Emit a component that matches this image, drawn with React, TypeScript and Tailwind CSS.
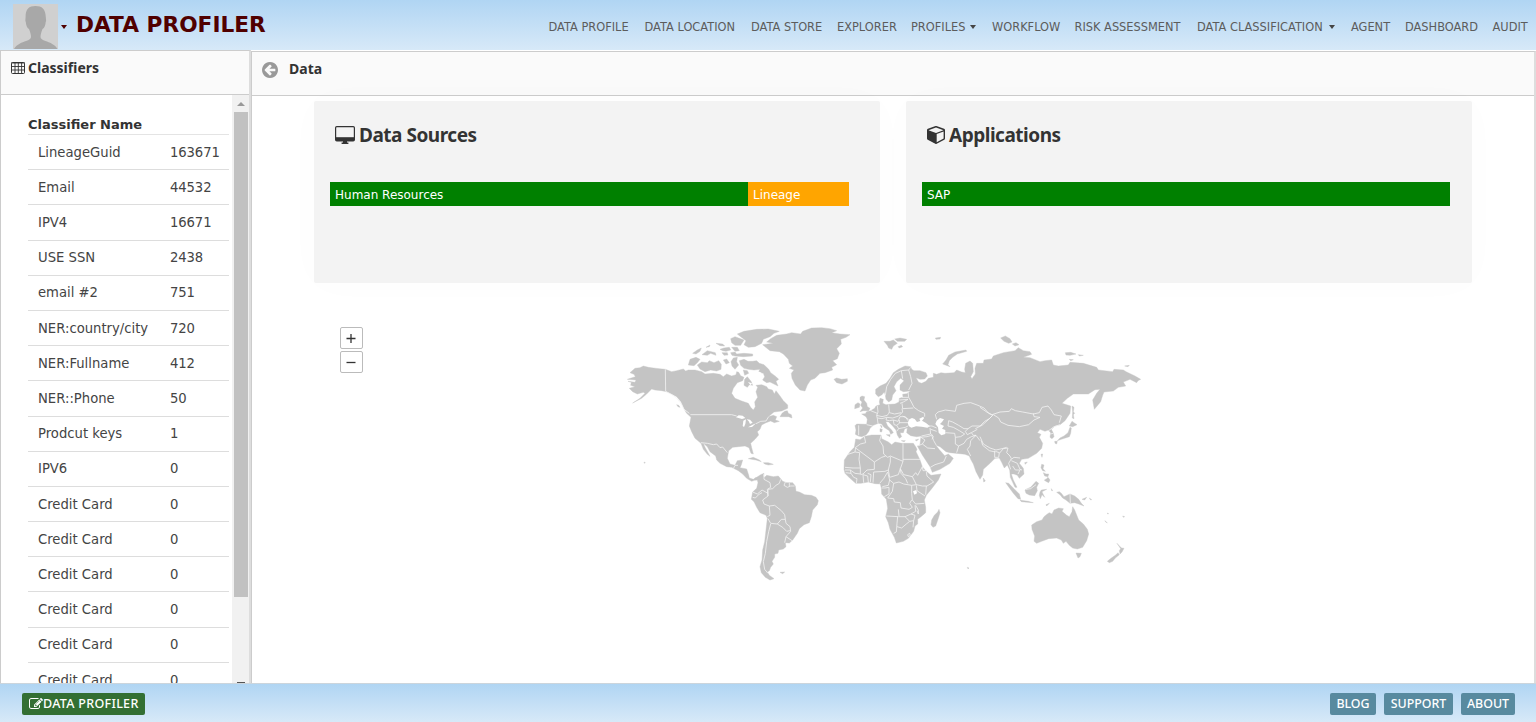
import type { ReactNode } from "react";

type Tile = "na" | "gl" | "eu" | "er" | "sa" | "af" | "as";
type Segment = [Tile, string];

const TILE_ORIGIN: Record<Tile, [number, number]> = {
  na: [0, 0],
  gl: [360, 0],
  eu: [660, 0],
  er: [1080, 0],
  sa: [360, 390],
  af: [645, 300],
  as: [960, 240],
};

function points(segments: Segment[]) {
  return segments
    .map(([tile, text]) => {
      const [ox, oy] = TILE_ORIGIN[tile];
      return text
        .trim()
        .split(/\s+/)
        .map((pair) => {
          const [x, y] = pair.split(",").map(Number);
          return `${x + ox},${y + oy}`;
        })
        .join(" ");
    })
    .join(" ");
}

const LAND: Segment[][] = [
  // North and Central America
  [["na", "30,158 45,145 60,143 70,138 85,142 100,144 118,146 136,148 155,155 170,152 190,147 197,153 205,150 225,150 245,155 255,162 280,160 300,163 310,170 320,162 335,168 348,164 350,155 356,157 362,167 372,172 368,182 352,188 340,205 335,220 345,235 365,243 385,250 392,262 400,270 406,260 404,246 413,232 408,215 413,202 408,196 425,194 440,200 445,207 457,210 463,222 468,212 480,228 490,242 503,255 503,265 485,273 462,276 445,290 460,286 470,290 466,300 478,304 463,308 452,303 438,308 425,315 420,328 412,335 416,345 405,358 392,370 395,383 400,402 393,400 387,383 375,378 355,380 338,382 326,392 322,415 330,432 345,436 352,422 368,420 364,434 360,443 380,447 386,465 388,474 400,478 408,472 416,474 412,480 403,481 395,484 380,475 368,462 355,452 335,442 320,440 300,430 290,420 287,408 270,395 262,380 250,370 255,382 270,409 262,403 250,388 243,370 225,355 215,335 208,318 213,292 200,280 193,268 183,245 170,230 155,222 140,215 125,212 105,210 95,207 80,222 65,235 38,249 60,235 75,220 70,217 52,222 38,215 28,205 45,200 32,196 34,187 24,184 45,187 48,180 22,178 46,170 42,163"]],
  // Canadian archipelago
  [["na", "205,135 210,118 228,112 240,118 232,128 222,137"]],
  [["na", "232,135 245,126 262,128 268,122 282,128 296,122 304,133 303,148 290,153 272,150 255,155 240,147"]],
  [["na", "218,100 232,90 244,84 240,94 228,102"]],
  [["na", "246,104 262,92 286,98 288,106 272,100 262,106"]],
  [["na", "258,82 270,75 268,80"]],
  [["na", "288,70 308,72 314,78 300,77"]],
  [["na", "300,88 312,84 328,82 332,90 318,94 308,92"]],
  [["na", "310,120 320,117 328,128 318,132"]],
  [["na", "306,98 322,98 324,105 312,106"]],
  [["na", "332,98 345,96 350,102 372,100 398,102 398,108 370,110 345,108 336,106"]],
  [["na", "332,56 345,50 358,55 372,60 362,76 345,76 335,68"]],
  [["na", "335,82 352,82 358,92 345,94"]],
  [["na", "333,125 340,114 352,112 350,125 356,135 345,148 336,138"]],
  [["na", "352,42 372,34 410,28 445,27 478,34 462,40 450,50 430,58 425,70 405,80 385,82 372,74 378,62 362,50"]],
  [["na", "358,122 372,118 384,124 398,124 410,122 418,130 432,134 446,148 452,158 468,170 476,178 468,184 474,198 462,192 450,186 440,188 428,180 434,170 430,160 415,156 420,148 402,150 385,148 372,145 362,136"]],
  [["na", "372,196 374,178 382,170 393,184 398,196 388,194 382,202"]],
  [["na", "370,150 382,152 386,160 374,166"]],
  [["na", "480,290 486,280 494,274 502,272 505,280 514,284 516,294 506,290 498,290"]],
  [["na", "170,254 176,256 180,262 174,260"]],
  [["na", "385,416 400,412 418,420 424,425 408,420"]],
  [["na", "430,428 445,428 460,433 445,435 434,432"]],
  [["na", "72,426 76,428 73,430"]],
  // Greenland and Iceland
  [["gl", "68,74 100,70 80,66 92,56 110,46 140,42 155,38 182,42 188,34 215,24 245,23 270,26 290,32 275,38 300,42 330,44 318,52 302,58 304,72 290,86 298,100 292,116 278,122 290,134 275,142 278,150 255,158 240,160 225,175 212,180 202,195 195,213 180,210 166,195 156,175 154,160 162,150 148,145 158,138 148,130 145,118 130,102 118,95 90,92 80,84"]],
  [["gl", "282,178 290,174 305,178 322,176 322,184 306,192 290,188"]],
  // Eurasia
  [
    ["eu", "107,208 107,222 115,230 125,225 133,216 136,226 138,238 146,246 155,240 158,225 168,212 162,200 170,185 182,175 192,182 180,195 180,210 190,215 212,213 200,221 188,223 189,232 178,235 177,246 165,252 150,253 138,254 128,250 130,238 120,235 118,246 120,254 108,258 104,265 92,272 80,275 76,281 65,282 78,290 82,298 80,313 50,312 45,317 48,330 46,343 55,348 65,350 78,345 86,335 90,325 100,316 115,310 125,312 132,322 148,332 152,343 160,338 155,330 143,318 137,305 145,305 158,318 168,330 172,345 178,355 185,350 180,338 190,338 194,326 202,324 200,338 212,347 230,350 243,348 240,375 232,378 247,405 270,440 277,457 300,448 330,430 340,415 325,402 314,407 297,388 287,375 300,380 318,395 330,398 360,401"],
    ["as", "75,163 88,168 92,178 100,192 108,215 120,238 128,225 130,208 150,190 165,175 178,174 185,187 193,204 202,195 209,210 211,232 225,262 231,262 220,240 214,222 222,222 232,226 238,235 252,222 250,205 238,190 245,178 265,175 290,160 305,145 308,130 298,112 303,103 292,98 300,88 315,94 325,90 332,98 330,112 336,116 342,110 340,100 334,88 345,78"],
    ["er", "240,314 255,302 270,280 272,258 246,250 262,235 280,222 325,222 345,209 360,208 350,220 338,240 343,268 362,245 368,226 372,216 400,213 415,202 437,198 430,186 450,178 470,188 474,182 482,178 465,168 440,156 430,150 402,148 398,155 355,150 350,142 310,130 270,127 265,135 235,138 220,135 215,120 195,122 180,125 150,113 130,112 155,103 150,95 130,92 115,83 105,92 70,98 40,108 35,117 12,120 10,130"],
    ["eu", "410,130 405,145 406,162 396,176 392,170 400,155 398,130 390,123 377,130 374,148 376,158 365,156 350,150 342,158 315,160 303,158 290,163 280,160 280,172 265,175 258,184 245,190 236,187 228,173 240,178 254,177 262,168 258,158 240,152 222,152 215,148 212,140 195,138 175,148 160,158 150,175 138,190 120,198"],
  ],
  // Islands around Europe and the Arctic
  [["eu", "60,232 66,228 74,230 72,240 80,250 82,260 90,265 86,272 70,272 60,275 68,264 62,256 66,246 60,240"]],
  [["eu", "45,254 54,248 60,252 58,262 44,266"]],
  [["eu", "132,64 150,64 160,60 172,70 160,78 155,88 146,84 142,76"]],
  [["eu", "164,57 180,54 200,58 194,64 172,64"]],
  [["eu", "174,80 184,76 188,80 178,84"]],
  [["eu", "286,54 302,52 300,57 288,58"]],
  [["eu", "308,132 318,120 326,106 345,96 378,90 380,94 352,102 338,112 328,122 324,134 330,140"]],
  [["eu", "139,344 150,344 150,350"]],
  [["eu", "121,316 126,318 125,324"]],
  [["eu", "120,326 127,328 125,336 120,335"]],
  [["eu", "184,362 196,362 192,365"]],
  [["eu", "226,360 236,357 230,363"]],
  [["er", "62,54 76,48 90,56 96,66 86,70 72,64"]],
  [["er", "97,72 108,68 117,74 105,78"]],
  [["er", "256,98 272,97 288,102 270,106 258,105"]],
  [["er", "295,104 310,106 298,108"]],
  [["er", "268,118 280,119 272,122"]],
  [["er", "434,138 448,136 444,140"]],
  // Sakhalin and Japan
  [["er", "276,258 282,262 280,275 284,280 280,284 282,296 277,294 278,275"]],
  [["er", "268,318 276,304 282,308 291,314 278,320"]],
  [["er", "270,322 274,324 272,340 268,350 256,354 244,358 232,362 240,354 252,348 264,338"]],
  [["er", "224,364 232,364 230,372 225,370"]],
  // South-east Asia
  [["as", "303,163 308,162 306,172"]],
  [["as", "254,188 262,186 256,193"]],
  [["as", "130,234 136,243 131,246"]],
  [["as", "197,248 206,250 222,266 238,282 242,298 234,296 220,280 210,266"]],
  [["as", "240,300 252,302 265,304 280,308 262,307 244,305"]],
  [["as", "255,270 262,266 272,262 288,244 296,250 290,262 292,272 284,287 268,285 258,280"]],
  [["as", "300,276 304,270 320,268 306,275 308,280 314,292 306,284 301,296 298,286"]],
  [["as", "305,193 312,195 309,206 316,214 308,212 303,203"]],
  [["as", "310,218 318,222 326,222 324,230 314,228"]],
  [["as", "313,240 320,236 324,232 330,240 326,248 316,243"]],
  [["as", "334,266 338,272 335,272"]],
  [["as", "318,314 328,310 320,318"]],
  [["as", "350,277 358,275 364,280 372,290 390,282 404,288 416,298 424,310 432,318 416,312 404,308 390,310 378,300 368,294 360,284"]],
  [["as", "426,298 440,292 434,300"]],
  [["as", "448,294 455,299 452,300"]],
  // Australia, Tasmania, New Zealand
  [["as", "275,375 290,365 306,360 312,350 322,342 328,338 336,342 342,330 356,324 370,326 366,334 380,346 388,350 396,335 398,320 404,330 410,345 416,360 430,372 442,388 446,402 440,422 428,442 412,447 398,444 388,436 378,424 370,430 364,420 350,414 326,416 305,424 290,430 282,424 284,408 276,388"]],
  [["as", "408,459 424,460 420,470 414,474"]],
  [["as", "531,430 538,438 545,444 552,445 546,456 540,462 538,452 542,446"]],
  [["as", "534,458 538,464 526,474 518,484 508,488 502,484 514,474 526,466"]],
  [["as", "495,362 502,369 497,366"]],
  [["as", "548,348 554,350 550,352"]],
  [["as", "502,339 506,341 503,342"]],
  [["as", "82,502 87,504 84,507"]],
  // South America
  [["sa", "50,82 62,74 72,70 70,78 74,82 80,76 90,78 100,80 115,78 122,86 128,94 140,98 158,98 166,108 168,124 178,126 194,134 214,136 228,142 235,152 232,164 218,180 214,200 208,218 192,224 178,236 172,250 158,270 148,279 136,278 138,290 130,297 116,300 114,310 104,312 104,322 96,334 100,342 92,352 88,362 82,366 88,376 102,386 90,390 76,382 64,368 60,350 66,330 68,300 74,275 78,240 82,205 78,196 60,188 50,172 42,155 34,148 38,126 50,115 54,98"]],
  [["sa", "120,367 134,366 128,371"]],
  // Africa and Madagascar
  [["af", "62,57 75,59 90,49 110,45 138,45 140,56 160,66 170,74 180,66 200,70 235,70 242,80 246,88 243,95 255,120 262,140 272,152 288,166 318,162 310,180 290,206 274,226 268,240 272,262 272,278 258,290 248,298 248,312 240,318 236,334 220,355 205,364 184,369 178,352 165,328 160,308 152,290 158,265 154,238 140,222 139,205 136,192 120,191 100,186 78,190 62,190 45,175 30,160 27,148 28,120 45,95 58,82"]],
  [["af", "290,300 298,286 308,276 312,268 315,278 310,295 302,318 294,322 288,314"]],
];

const WATER: Segment[][] = [
  [["eu", "206,318 203,308 208,298 216,294 224,297 231,306 241,303 238,296 250,290 252,295 246,302 258,309 270,319 262,323 245,320 228,319 214,323"]],
  [["eu", "290,302 300,294 312,298 306,306 300,312 312,318 306,326 316,330 316,342 304,346 296,338 294,322 286,312"]],
  [["na", "348,292 356,286 368,287 376,294 366,297"]],
  [["na", "368,318 370,302 378,298 376,312 372,321"]],
  [["na", "380,298 390,299 398,308 390,312 386,304"]],
  [["na", "384,322 398,314 408,310 396,321"]],
  [["af", "234,214 244,210 246,220 238,224"]],
  [["na", "396,160 412,152 424,158 420,172 408,178 400,172"]],
  [["na", "384,186 396,190 392,196"]],
];

const BORDERS: Segment[][] = [
  [["na", "136,148 137,214 152,222 168,232 184,252 192,268 208,280"]],
  [["na", "211,284 335,284 350,288"]],
  [["na", "408,311 422,304 438,303 446,290"]],
  [["na", "243,368 262,370 280,374 290,372 300,383 308,381 322,398"]],
  [["na", "340,446 345,436 354,436"]],
  // South America
  [["sa", "72,72 72,88 90,98 92,112 82,118 84,138"]],
  [["sa", "38,126 52,132 66,120 84,130"]],
  [["sa", "122,88 118,100 108,106 98,116 84,118 84,138 68,150 72,162 88,168"]],
  [["sa", "136,96 132,106 142,112 152,108 164,108"]],
  [["sa", "148,98 148,108"]],
  [["sa", "38,142 46,144 58,132 66,128"]],
  [["sa", "82,200 90,196 88,168 104,166 124,182 134,194 136,208 124,208 112,222 92,220 84,206"]],
  [["sa", "92,222 86,245 80,275 76,310 70,335 74,358 84,370"]],
  [["sa", "136,208 138,220 150,230 152,244 138,260 134,278"]],
  [["sa", "112,222 128,232 140,244 150,242"]],
  [["sa", "138,260 156,272"]],
  // Africa
  [["af", "88,50 92,68 76,72 62,82 60,96 36,104"]],
  [["af", "60,96 74,98 72,118 76,144 54,144 30,142"]],
  [["af", "62,84 118,126 140,112 152,108"]],
  [["af", "138,46 134,62 144,78 146,102 158,112 166,108 204,124 204,70"]],
  [["af", "204,118 256,118"]],
  [["af", "118,126 118,148 96,150 84,162 76,164"]],
  [["af", "76,144 76,162 60,160 46,150"]],
  [["af", "30,150 46,150 48,160 32,158"]],
  [["af", "48,160 56,172 66,176 64,190"]],
  [["af", "84,164 86,188"]],
  [["af", "100,186 98,168 84,164"]],
  [["af", "106,186 108,164 98,160"]],
  [["af", "114,188 116,156 150,154 160,150 166,126 166,110"]],
  [["af", "134,190 146,176 158,156 164,180 160,196 142,200"]],
  [["af", "160,150 164,172 190,164 196,146 204,124"]],
  [["af", "196,146 206,164 232,170 242,158 248,166 262,140 264,152 276,152"]],
  [["af", "164,180 176,190 192,186 206,192 230,196 244,194 232,170"]],
  [["af", "196,146 198,160 212,176 218,190"]],
  [["af", "244,194 262,198 276,198 296,186 276,168 274,156"]],
  [["af", "274,198 272,224"]],
  [["af", "244,196 246,212 270,228"]],
  [["af", "230,196 230,220 232,240 242,252 268,250"]],
  [["af", "140,204 150,204 162,202 162,222 148,230"]],
  [["af", "176,190 172,214 158,234 176,236 178,246 196,248 198,264 222,268 232,262 224,250 230,240"]],
  [["af", "154,288 190,290 210,290 228,282 242,274 240,256"]],
  [["af", "190,268 192,288"]],
  [["af", "188,290 186,310 184,336 176,340"]],
  [["af", "186,320 200,324 214,312 224,304 210,290"]],
  [["af", "224,304 236,302 240,286 228,282"]],
  [["af", "236,302 234,322"]],
  [["af", "242,256 250,270 250,282 246,272"]],
  [["af", "218,344 224,340 226,346 220,350 218,344"]],
  // Middle East
  [["af", "248,78 262,72 270,60 258,52"]],
  [["af", "262,72 278,84 300,86"]],
  [["af", "286,142 300,134 326,126 334,108"]],
  [["af", "254,52 276,50 290,46 296,62 304,76"]],
  // Europe
  [["eu", "136,226 140,200 152,178 166,160 184,152 206,150 212,142"]],
  [["eu", "184,152 188,176"]],
  [["eu", "206,150 212,170 216,190 206,210"]],
  [["eu", "204,214 206,232 214,246 222,262 236,272 254,280 254,290"]],
  [["eu", "178,240 204,238"]],
  [["eu", "186,232 206,232"]],
  [["eu", "180,250 190,246 204,238"]],
  [["eu", "186,250 188,266 220,264"]],
  [["eu", "112,258 114,276 110,286 126,290 142,286 146,280 148,276 146,254"]],
  [["eu", "92,272 112,280"]],
  [["eu", "80,314 98,318"]],
  [["eu", "56,316 56,346"]],
  [["eu", "110,286 112,296 114,310"]],
  [["eu", "112,294 126,296 140,292 158,294 176,288 188,276 186,266"]],
  [["eu", "148,278 164,282 184,278"]],
  [["eu", "140,292 138,300 148,302 160,300 174,304 180,290 196,290 204,302"]],
  [["eu", "160,300 162,314 170,316 178,310 178,300"]],
  [["eu", "178,308 204,308"]],
  [["eu", "170,316 176,326 196,322 204,318"]],
  [["eu", "176,326 170,334"]],
  [["eu", "188,288 206,298"]],
  [["eu", "262,318 276,318 290,324"]],
  [["eu", "270,324 272,342 244,348"]],
  [["eu", "272,328 290,334"]],
  [["eu", "274,342 280,350 276,358"]],
  // Central Asia
  [["eu", "290,298 286,284 294,276 316,270 346,274 350,256 372,250 392,248 414,256 432,264 446,280 458,286"]],
  [["eu", "324,318 326,302 338,306 356,316 372,326 384,326 396,318 420,318 434,304 448,296 458,286"]],
  [["eu", "324,318 340,322 358,332 374,342 362,350 346,352 344,340 316,338"]],
  [["eu", "384,326 376,334 382,344 394,338 412,328"]],
  [["eu", "346,352 346,372 356,378 350,398"]],
  [["eu", "356,378 372,370 380,358 394,350 408,346"]],
  [["eu", "408,346 392,362 390,378 382,388 392,408"]],
  [["eu", "394,338 400,346 408,346 420,362"]],
  // Russia, Mongolia, China
  [["er", "36,284 20,276 0,262"]],
  [["er", "36,284 60,276 88,274 94,266 106,272 128,276 160,282 178,278 186,262 204,258 214,270 222,284 244,288 238,308"]],
  [["er", "40,284 56,294 62,306 84,316 118,320 146,314 162,300 180,292 162,290 160,280"]],
  [["er", "40,284 24,300 6,316 -14,326"]],
  [["er", "0,350 10,372 30,384 48,390 66,386 80,382"]],
  [["er", "4,362 8,376 28,392 46,396"]],
  [["er", "206,332 222,320 240,314"]],
  [["er", "210,342 220,340"]],
  [["as", "164,152 164,172 176,172 178,158 166,154"]],
  [["as", "178,160 190,146 204,144 200,158 210,168 214,176 206,190 212,208"]],
  [["as", "214,178 222,172 240,174"]],
  [["as", "214,182 232,190 240,208 246,210"]],
  [["as", "218,198 226,210 240,210 234,222"]],
  [["as", "258,268 272,266 288,254"]],
  [["as", "390,282 391,310"]],
];

function WorldMap() {
  return (
    <svg viewBox="0 0 1590 810" className="block h-[270px] w-[530px]" role="img" aria-label="World map">
      <g fill="#c4c4c4" stroke="#c4c4c4" strokeWidth="1.2" strokeLinejoin="round">
        {LAND.map((shape, i) => (
          <polygon key={i} points={points(shape)} />
        ))}
      </g>
      <g fill="#ffffff">
        {WATER.map((shape, i) => (
          <polygon key={i} points={points(shape)} />
        ))}
      </g>
      <g fill="none" stroke="#f4f4f4" strokeWidth="2.4" strokeLinejoin="round">
        {BORDERS.map((line, i) => (
          <polyline key={i} points={points(line)} />
        ))}
      </g>
    </svg>
  );
}

function TableIcon() {
  return (
    <svg viewBox="0 0 14 12" className="h-3 w-3.5 shrink-0" fill="none" stroke="#333333">
      <rect x="0.5" y="0.5" width="13" height="11" rx="1" />
      <path d="M0 1h14M0 4.500h14M0 8h14M4 1v10.500M7.300 1v10.500M10.600 1v10.500" strokeWidth="0.9" />
    </svg>
  );
}

function BackIcon() {
  return (
    <svg viewBox="128 128 1536 1536" className="h-4 w-4 shrink-0" fill="#999999">
      <path d="M1408 960v-128q0-26-19-45t-45-19h-502l189-189q19-19 19-45t-19-45l-91-91q-18-18-45-18t-45 18l-362 362-91 91q-18 18-18 45t18 45l91 91 362 362q18 18 45 18t45-18l91-91q18-18 18-45t-18-45l-189-189h502q26 0 45-19t19-45zm256-64q0 209-103 385.5t-279.5 279.5-385.5 103-385.5-103-279.5-279.5-103-385.5 103-385.5 279.5-279.5 385.5-103 385.5 103 279.5 279.5 103 385.5z" />
    </svg>
  );
}

function DesktopIcon() {
  return (
    <svg viewBox="0 0 20 18" className="h-[18px] w-5 shrink-0" fill="none" stroke="#333333">
      <rect x="0.6" y="0.6" width="18.8" height="14.400" rx="1.200" strokeWidth="1.200" />
      <path d="M1 11.200H19V15H1z" fill="#333333" stroke="none" />
      <path d="M8 15h4v1.400h1.400V18H6.600v-1.600H8z" fill="#333333" stroke="none" />
    </svg>
  );
}

function CubeIcon() {
  return (
    <svg viewBox="0 128 1664 1664" className="h-[18px] w-[18px] shrink-0" fill="#333333">
      <path d="M896 1629l640-349v-636l-640 233v752zm-64-865l698-254-698-254-698 254zm832-252v768q0 35-18 65t-49 47l-704 384q-28 16-61 16t-61-16l-704-384q-31-17-49-47t-18-65v-768q0-40 23-73t61-47l704-256q22-8 44-8t44 8l704 256q38 14 61 47t23 73z" />
    </svg>
  );
}

function EditIcon() {
  return (
    <svg viewBox="0 128 1792 1536" className="h-3 w-3.5 shrink-0" fill="#ffffff">
      <path d="M888 1184l116-116-152-152-116 116v56h96v96h56zm440-720q-16-16-33 1l-350 350q-17 17-1 33t33-1l350-350q17-17 1-33zm80 594v190q0 119-84.5 203.5t-203.5 84.5h-832q-119 0-203.500-84.5t-84.5-203.500v-832q0-119 84.5-203.500t203.500-84.5h832q63 0 117 25 15 7 18 23 3 17-9 29l-49 49q-14 14-32 8-23-6-45-6h-832q-66 0-113 47t-47 113v832q0 66 47 113t113 47h832q66 0 113-47t47-113v-126q0-13 9-22l64-64q15-15 35-7t20 29zm-96-738l288 288-672 672h-288v-288zm444 132l-92 92-288-288 92-92q28-28 68-28t68 28l152 152q28 28 28 68t-28 68z" />
    </svg>
  );
}

function Avatar() {
  return (
    <svg viewBox="0 0 45 45" className="h-[45px] w-[45px] shrink-0">
      <rect width="45" height="45" fill="#d0d0d0" />
      <path
        fill="#a8a8a8"
        d="M1 45C4 40 9 38.500 13 37c3-1.200 5-2 5-4 0-3-1-5-2-8-2-1-3-4-3.200-7-.8-1-.3-3-.2-5C12.500 5 16 2 22.500 2S32.500 5 32.800 13c0 2 .8 4-.1 5-.2 3-1.200 6-3.200 7-1 3-2 5-2 8 0 2 2 2.800 5 4 4 1.500 9 3 12 8z"
      />
    </svg>
  );
}

const NAV: { label: string; width: string; menu?: boolean }[] = [
  { label: "DATA PROFILE", width: "w-20" },
  { label: "DATA LOCATION", width: "w-[90.5px]" },
  { label: "DATA STORE", width: "w-[70px]" },
  { label: "EXPLORER", width: "w-[58px]" },
  { label: "PROFILES", width: "w-[65px]", menu: true },
  { label: "WORKFLOW", width: "w-[66.5px]" },
  { label: "RISK ASSESSMENT", width: "w-[106.5px]" },
  { label: "DATA CLASSIFICATION", width: "w-[138px]", menu: true },
  { label: "AGENT", width: "w-[38px]" },
  { label: "DASHBOARD", width: "w-[71.5px]" },
  { label: "AUDIT", width: "w-[35.5px]" },
];

const CLASSIFIERS: [string, number][] = [
  ["LineageGuid", 163671],
  ["Email", 44532],
  ["IPV4", 16671],
  ["USE SSN", 2438],
  ["email #2", 751],
  ["NER:country/city", 720],
  ["NER:Fullname", 412],
  ["NER::Phone", 50],
  ["Prodcut keys", 1],
  ["IPV6", 0],
  ["Credit Card", 0],
  ["Credit Card", 0],
  ["Credit Card", 0],
  ["Credit Card", 0],
  ["Credit Card", 0],
  ["Credit Card", 0],
];

function Card({ title, icon, children }: { title: string; icon: ReactNode; children: ReactNode }) {
  return (
    <section className="h-[182px] w-[566px] rounded-xs bg-[#f3f3f3] px-4 pt-5 shadow-[0_0_40px_rgba(0,0,0,0.015)]">
      <h2 className="flex h-7 items-center gap-1 pl-[5px] font-['Noto_Sans',sans-serif] text-[19px] font-bold text-[#333]">
        {icon}
        <span className="whitespace-nowrap tracking-[-0.48px]">{title}</span>
      </h2>
      <div className="mt-[33px] flex h-6 text-[12px] text-white">{children}</div>
    </section>
  );
}

export default function App() {
  return (
    <div className="flex h-[722px] w-[1536px] flex-col overflow-hidden bg-white font-['DejaVu_Sans',Verdana,sans-serif] text-[#333]">
      <header className="flex h-[50px] shrink-0 items-start bg-linear-to-b from-[#b0d5f3] to-[#d7e9f8] pl-[13px] pt-1">
        <Avatar />
        <span className="mt-[21px] ml-[3px] border-x-[3.500px] border-t-4 border-x-transparent border-t-[#500000]" />
        <h1 className="ml-[9px] mt-1.5 whitespace-nowrap text-[21.700px] leading-[30px] font-bold text-[#500000]">DATA PROFILER</h1>
        <nav className="mt-3.5 mr-2 ml-auto flex gap-4 text-[11.400px] leading-[18px] text-[#5c5c5c]">
          {NAV.map((item) => (
            <a key={item.label} className={`${item.width} flex items-center justify-between whitespace-nowrap`}>
              {item.label}
              {item.menu && <span className="border-x-[3.500px] border-t-4 border-x-transparent border-t-[#444]" />}
            </a>
          ))}
        </nav>
      </header>

      <main className="flex min-h-0 flex-1">
        <aside className="flex w-[251px] shrink-0 flex-col border border-b-0 border-[#ccc] border-r-2 border-r-[#ddd]">
          <div className="flex h-11 shrink-0 items-start gap-[3px] border-b border-[#ccc] bg-[#fafafa] pt-[7px] pl-2.5">
            <span className="mt-1">
              <TableIcon />
            </span>
            <h2 className="font-['Noto_Sans',sans-serif] text-[14px] leading-5 font-bold">Classifiers</h2>
          </div>
          <div className="flex min-h-0 flex-1">
            <div className="w-[228px] shrink-0 overflow-hidden pt-[21px] pl-[27px]">
              <h3 className="h-[19px] border-b border-[#e4e4e4] text-[13px] leading-[18px] font-bold">Classifier Name</h3>
              {CLASSIFIERS.map(([name, count], i) => (
                <div key={i} className="flex h-[35.200px] items-center border-b border-[#ddd] pt-px pl-2.5 text-[13.200px] text-[#444]">
                  <span className="w-[132px] whitespace-nowrap">{name}</span>
                  <span className="tracking-[-0.1px]">{count}</span>
                </div>
              ))}
            </div>
            <div className="ml-[3px] flex w-[17px] flex-col items-center bg-[#f1f1f1] pt-[7px]">
              <span className="border-x-4 border-b-4 border-x-transparent border-b-[#999]" />
              <span className="mt-1.5 h-[485px] w-3.5 shrink-0 bg-[#c1c1c1]" />
              <span className="mt-[85px] h-px w-2 shrink-0 bg-[#555]" />
            </div>
          </div>
        </aside>

        <section className="mt-px flex min-w-0 flex-1 flex-col border-t border-r-2 border-l border-t-[#ccc] border-r-[#ddd] border-l-[#ccc]">
          <div className="flex h-11 shrink-0 items-start border-b border-[#ccc] bg-[#fafafa] pt-[7px] pl-2.5">
            <span className="mt-[3px]">
              <BackIcon />
            </span>
            <h2 className="ml-[11px] font-['Noto_Sans',sans-serif] text-[14px] leading-5 font-bold">Data</h2>
          </div>
          <div className="flex gap-[26px] pt-[5px] pl-[62px]">
            <Card title="Data Sources" icon={<DesktopIcon />}>
              <div className="w-[418px] bg-[#008000] pl-[5px] leading-[26px]">Human Resources</div>
              <div className="w-[101px] bg-[#ffa500] pl-[5px] leading-[26px]">Lineage</div>
            </Card>
            <Card title="Applications" icon={<CubeIcon />}>
              <div className="w-[528px] bg-[#008000] pl-[5px] leading-[26px]">SAP</div>
            </Card>
          </div>
          <div className="flex pt-[37px] pl-[88px]">
            <div className="flex w-[280px] flex-col gap-0.5 pt-[7px]">
              {["M5.500 10.500h9M10 6v9", "M5.500 10.500h9"].map((d) => (
                <button key={d} className="h-[22px] w-[22.500px] rounded-xs border border-[#bbb] bg-white">
                  <svg viewBox="0 0 21 20" className="h-5 w-[21px]" fill="none" stroke="#333" strokeWidth="1.300">
                    <path d={d} />
                  </svg>
                </button>
              ))}
            </div>
            <WorldMap />
          </div>
        </section>
      </main>

      <footer className="flex h-[39px] shrink-0 items-center border-t border-[#ccd5dc] bg-linear-to-b from-[#b0d5f3] to-[#d7e9f8] pr-[21px] pl-[22px] pt-0.5 font-['Noto_Sans',sans-serif] text-[12px] font-medium text-white">
        <a className="flex h-[22px] w-[123px] items-center rounded-xs bg-[#336f33] pl-[7px] text-[12.500px] tracking-[0.3px] whitespace-nowrap">
          <EditIcon />
          DATA PROFILER
        </a>
        <div className="ml-auto flex gap-2 text-[12.400px]">
          <a className="flex h-[22px] w-[46px] items-center justify-center rounded-xs bg-[#588a9f]">BLOG</a>
          <a className="flex h-[22px] w-[69px] items-center justify-center rounded-xs bg-[#588a9f]">SUPPORT</a>
          <a className="flex h-[22px] w-[54px] items-center justify-center rounded-xs bg-[#588a9f]">ABOUT</a>
        </div>
      </footer>
    </div>
  );
}
